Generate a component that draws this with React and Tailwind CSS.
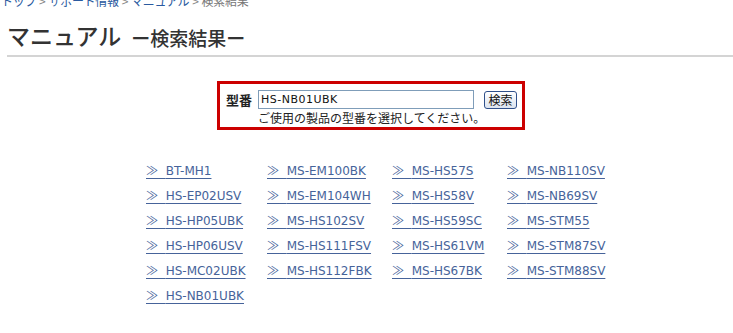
import React from "react";

const cols = [
  ["BT-MH1", "HS-EP02USV", "HS-HP05UBK", "HS-HP06USV", "HS-MC02UBK", "HS-NB01UBK"],
  ["MS-EM100BK", "MS-EM104WH", "MS-HS102SV", "MS-HS111FSV", "MS-HS112FBK"],
  ["MS-HS57S", "MS-HS58V", "MS-HS59SC", "MS-HS61VM", "MS-HS67BK"],
  ["MS-NB110SV", "MS-NB69SV", "MS-STM55", "MS-STM87SV", "MS-STM88SV"],
];

const jp = { fontFamily: '"Noto Sans CJK JP", "Noto Sans", sans-serif' };
const latin = { fontFamily: '"DejaVu Sans", "Noto Sans CJK JP", sans-serif' };

function Sep() {
  return <span className="mx-[3px] text-[#888]">&gt;</span>;
}

export default function App() {
  return (
    <div className="w-[733px] h-[333px] overflow-hidden bg-white relative">
      <div className="-mt-[7px] pl-[1px] flex text-[12px] leading-[16px] tracking-[-0.3px] text-[#777]" style={jp}>
        <span className="text-[#2a5aa0]">トップ</span><Sep /><span className="text-[#2a5aa0]">サポート情報</span><Sep /><span className="text-[#2a5aa0]">マニュアル</span><Sep /><span>検索結果</span>
      </div>
      <div className="mt-[10px] pl-[7px] flex items-end text-[#333]" style={jp}>
        <span className="text-[23px] leading-[32px] font-medium">マニュアル</span>
        <span className="ml-[10px] text-[19px] leading-[27px] font-medium">ー検索結果ー</span>
      </div>
      <div className="ml-[7px] mt-[4px] h-[2px] bg-[#d4d4d4]" />
      <div className="flex justify-center mt-[24px]">
        <div className="ml-[9px] w-[308px] h-[49px] border-[3px] border-[#cc0000] pl-[6px] pt-[6px]">
          <div className="flex items-center">
            <span className="text-[13px] font-bold text-[#222] w-[32px]" style={jp}>型番</span>
            <div className="w-[216px] h-[19px] border border-[#7f9db9] bg-white flex items-center px-[2px] text-[11px] tracking-[0.5px] text-[#111]" style={latin}>HS-NB01UBK</div>
            <button className="ml-[10px] w-[33px] h-[18px] border border-[#30508a] rounded-[3px] bg-gradient-to-b from-[#ffffff] to-[#dce4ef] text-[12px] leading-[14px] text-[#111]" style={jp}>検索</button>
          </div>
          <div className="pl-[32px] text-[12px] leading-[16px] text-[#222]" style={jp}>ご使用の製品の型番を選択してください。</div>
        </div>
      </div>
      <div className="flex pl-[146px] mt-[32px]">
        {cols.map((c, i) => (
          <div key={i} className={["flex flex-col", i === 0 ? "w-[121px]" : i === 1 ? "w-[125px]" : i === 2 ? "w-[115px]" : "w-[120px]"].join(" ")}>
            {c.map((m) => (
              <div key={m} className="h-[25px] flex items-start">
                <a className="block text-[12px] leading-[16px] text-[#46639a] underline decoration-[#46639a] underline-offset-[3px]" style={latin}>
                  <span style={jp}>≫</span>&nbsp;&nbsp;{m}
                </a>
              </div>
            ))}
          </div>
        ))}
      </div>
    </div>
  );
}
